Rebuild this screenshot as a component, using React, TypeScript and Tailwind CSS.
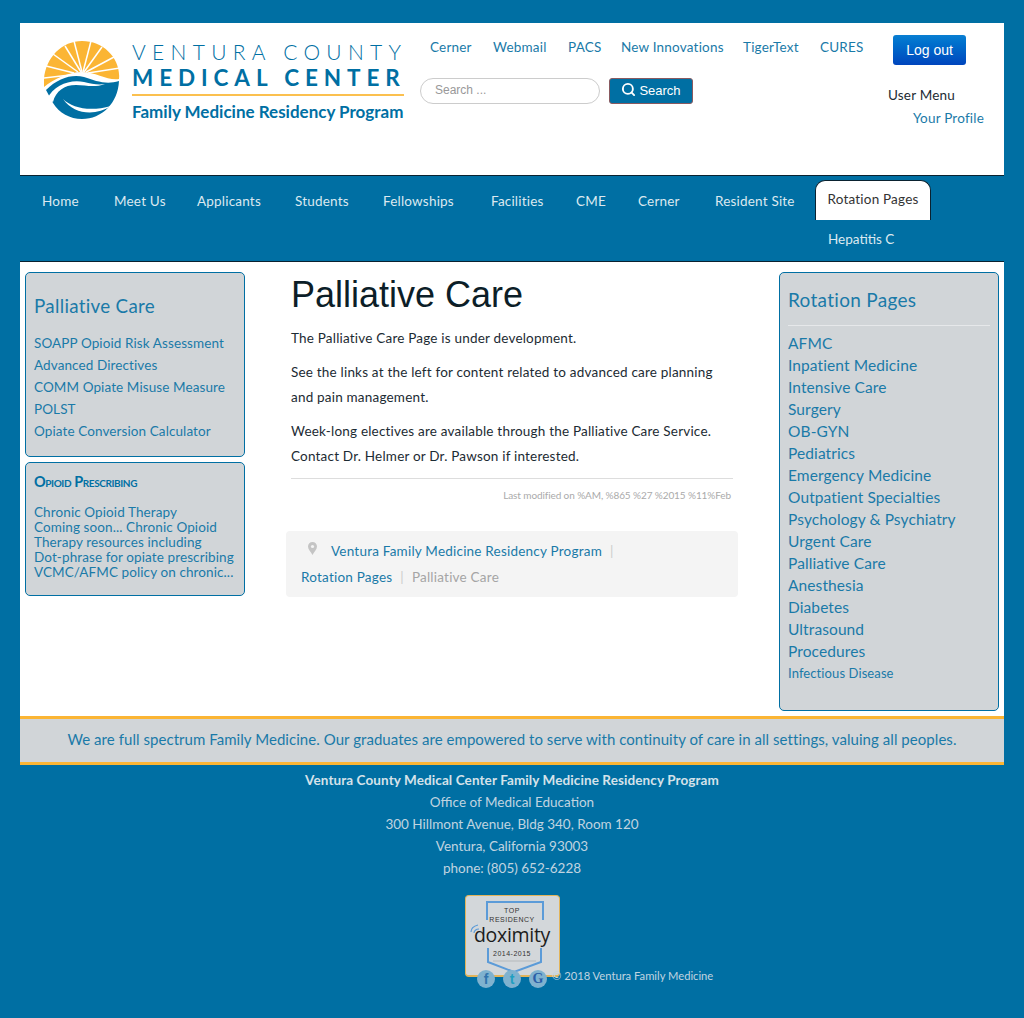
import React from 'react';
import { Search } from 'lucide-react';

const topLinks = [
  { label: 'Cerner', w: 'w-[63px]' },
  { label: 'Webmail', w: 'w-[75px]' },
  { label: 'PACS', w: 'w-[53px]' },
  { label: 'New Innovations', w: 'w-[122px]' },
  { label: 'TigerText', w: 'w-[77px]' },
  { label: 'CURES', w: 'w-[60px]' },
];

const navItems = [
  { label: 'Home', w: 'w-[72px]' },
  { label: 'Meet Us', w: 'w-[83px]' },
  { label: 'Applicants', w: 'w-[98px]' },
  { label: 'Students', w: 'w-[88px]' },
  { label: 'Fellowships', w: 'w-[108px]' },
  { label: 'Facilities', w: 'w-[85px]' },
  { label: 'CME', w: 'w-[62px]' },
  { label: 'Cerner', w: 'w-[77px]' },
  { label: 'Resident Site', w: 'w-[100px]' },
];

const sideLinks = ['SOAPP Opioid Risk Assessment', 'Advanced Directives', 'COMM Opiate Misuse Measure', 'POLST', 'Opiate Conversion Calculator'];

const rotationLinks = [
  'AFMC', 'Inpatient Medicine', 'Intensive Care', 'Surgery', 'OB-GYN', 'Pediatrics', 'Emergency Medicine',
  'Outpatient Specialties', 'Psychology & Psychiatry', 'Urgent Care', 'Palliative Care', 'Anesthesia', 'Diabetes',
  'Ultrasound', 'Procedures',
];

const footerLines = ['Office of Medical Education', '300 Hillmont Avenue, Bldg 340, Room 120', 'Ventura, California 93003', 'phone: (805) 652-6228'];

function LogoMark() {
  return (
    <svg width="76" height="78" viewBox="0 0 76 78" className="shrink-0">
      {/* sun */}
      <path d="M0 46 C-2 20 16 0 38 0 C60 0 77 18 75 38 C64 40 52 31 38 31 C24 31 10 38 0 46 Z" fill="#fbb534" />
      <g stroke="#ffffff" strokeWidth="1.5" fill="none">
        <path d="M37 31 L21 5" />
        <path d="M38 31 L30 0" />
        <path d="M39 31 L47 0" />
        <path d="M40 31 L58 6" />
        <path d="M42 31 L70 16" />
        <path d="M44 32 L76 27" />
        <path d="M34 31 L9 13" />
        <path d="M30 32 L2 25" />
        <path d="M26 34 L0 37" />
      </g>
      {/* water */}
      <path d="M2 49 C14 37 28 33 40 36 C52 40 62 44 75 40 C74 62 58 78 38 78 C26 78 15 72 9 62 Z" fill="#006fa3" />
      <path d="M3 58 C10 44 26 38 40 41 C48 43 54 44 61 43 C50 47 42 44 32 44 C20 44 12 50 9 61 Z" fill="#ffffff" />
      <path d="M19 58 C28 67 46 71 67 65 C52 75 30 74 19 58 Z" fill="#ffffff" />
    </svg>
  );
}

function DoximityBadge() {
  return (
    <div className="relative w-[95px] h-[82px] bg-[#d3d7da] rounded-[4px] border border-b-2 border-[#e2b45a] overflow-hidden">
      <svg width="95" height="82" viewBox="0 0 95 82" className="absolute left-[-1px] top-[-1px]">
        <path d="M22 25 V7 H78 V25" fill="none" stroke="#5b9bd8" strokeWidth="2" />
        <path d="M23 53 V67 L49 77 L76 67 V53" fill="none" stroke="#5b9bd8" strokeWidth="2" />
        <path d="M28 66 H71" stroke="#b5b9bc" strokeWidth="1" />
        <path d="M6 37 C6 33 9 31 13 30" fill="none" stroke="#5b9bd8" strokeWidth="1.2" />
        <path d="M9 38 C9 36 11 34 14 34" fill="none" stroke="#5b9bd8" strokeWidth="1.2" />
      </svg>
      <div className="relative flex flex-col items-center">
        <div className="mt-[10px] text-[7px] leading-[9px] tracking-[0.5px] text-[#333] text-center font-['Liberation_Sans',sans-serif]">TOP<br />RESIDENCY</div>
        <div className="text-[19.5px] leading-[22px] text-[#1c1c1c] tracking-[-0.3px] font-medium font-['Open_Sans',sans-serif]">doximity</div>
        <div className="mt-[4px] text-[7px] leading-[8px] tracking-[0.5px] text-[#333] font-['Liberation_Sans',sans-serif]">2014-2015</div>
      </div>
    </div>
  );
}

export default function App() {
  return (
    <div className="min-h-[1018px] bg-[#006fa3] pt-[23px] px-[20px] font-['Lato',sans-serif] text-[13.5px] text-[#1c2b33]">
      {/* header */}
      <header className="h-[152px] bg-white flex">
        <div className="w-[400px] pl-[24px] pt-[18px] flex gap-[12px] shrink-0">
          <LogoMark />
          <div className="text-[#006fa3] w-[272px]">
            <div className="text-[21px] leading-[25px] tracking-[6.3px] font-light whitespace-nowrap mt-[-2px]">VENTURA COUNTY</div>
            <div className="text-[22.5px] leading-[25px] tracking-[5.9px] font-bold whitespace-nowrap mt-[1px]">MEDICAL CENTER</div>
            <div className="h-[2px] bg-[#fbc04f] mt-[4px]" />
            <div className="text-[17px] leading-[22px] font-bold whitespace-nowrap mt-[5px]">Family Medicine Residency Program</div>
          </div>
        </div>
        <div className="w-[468px] shrink-0">
          <nav className="flex pl-[10px] pt-[15px] h-[55px] text-[#1a7aa8]">
            {topLinks.map((l) => (
              <a key={l.label} className={`${l.w} whitespace-nowrap leading-[18px] tracking-[0.2px]`}>{l.label}</a>
            ))}
          </nav>
          <div className="flex items-start gap-[9px]">
            <div className="w-[180px] h-[26px] rounded-full border border-[#ccc] pl-[14px] text-[12px] leading-[23px] text-[#999] font-['Liberation_Sans',sans-serif]">Search ...</div>
            <button className="w-[84px] h-[26px] flex items-center justify-center gap-[3px] bg-[#006fa3] border border-[#8a5a60] rounded-[3px] text-white text-[13px] font-['Liberation_Sans',sans-serif]">
              <Search size={15} strokeWidth={3} className="mt-[-3px]" />
              Search
            </button>
          </div>
        </div>
        <div className="flex-1 flex flex-col pt-[12px]">
          <button className="ml-[5px] w-[73px] h-[30px] rounded-[3px] bg-gradient-to-b from-[#0a7fd2] to-[#0045bd] text-white text-[14px] font-['Liberation_Sans',sans-serif]">Log out</button>
          <div className="mt-[21px] leading-[18px] tracking-[0.2px] text-[#1c2b33]">User Menu</div>
          <a className="mt-[5px] leading-[18px] tracking-[0.2px] text-[#1a7aa8] text-right pr-[20px]">Your Profile</a>
        </div>
      </header>

      {/* main nav */}
      <div className="h-[87px] bg-[#006fa3] border-y border-[#0a2230]">
        <div className="flex pl-[22px] h-[44px]">
          {navItems.map((n) => (
            <a key={n.label} className={`${n.w} pt-[16px] leading-[18px] whitespace-nowrap tracking-[0.2px] text-[#dce9f0]`}>{n.label}</a>
          ))}
          <a className="mt-[4px] w-[116px] h-[40px] bg-white rounded-t-[10px] border-x border-t border-[#0a2230] text-center leading-[37px] text-[#333] whitespace-nowrap tracking-[0.2px]">Rotation Pages</a>
        </div>
        <a className="block pl-[808px] pt-[10px] leading-[18px] text-[#dce9f0]">Hepatitis C</a>
      </div>

      {/* three columns */}
      <main className="h-[454px] bg-white flex pt-[10px] pl-[5px]">
        <aside className="w-[220px] shrink-0 flex flex-col gap-[5px]">
          <div className="h-[185px] bg-[#d1d5d8] border border-[#006fa3] rounded-[5px] px-[8px] pt-[21px]">
            <h3 className="text-[18.8px] leading-[24px] text-[#1a7aa8] tracking-[0.3px]">Palliative Care</h3>
            <ul className="mt-[14px] text-[#1a7aa8]">
              {sideLinks.map((s) => (
                <li key={s} className="leading-[22px] whitespace-nowrap tracking-[0.1px]">{s}</li>
              ))}
            </ul>
          </div>
          <div className="h-[134px] bg-[#d1d5d8] border border-[#006fa3] rounded-[5px] px-[8px] pt-[9px]">
            <h3 className="text-[14.5px] leading-[20px] tracking-[-0.4px] text-[#006fa3] font-bold [font-variant:small-caps]">Opioid Prescribing</h3>
            <p className="mt-[13px] leading-[15px] text-[#1a7aa8] whitespace-nowrap tracking-[0.1px]">
              Chronic Opioid Therapy<br />Coming soon... Chronic Opioid<br />Therapy resources including<br />Dot-phrase for opiate prescribing<br />VCMC/AFMC policy on chronic...
            </p>
          </div>
        </aside>

        <section className="w-[534px] shrink-0 pl-[41px]">
          <div className="w-[442px] ml-[5px]">
            <h1 className="text-[36px] leading-[44px] text-[#0c1e28] font-['Liberation_Sans',sans-serif] mt-[1px]">Palliative Care</h1>
            <div className="mt-[9px] leading-[25px] tracking-[0.2px]">
              <p>The Palliative Care Page is under development.</p>
              <p className="mt-[9px] max-w-[430px]">See the links at the left for content related to advanced care planning and pain management.</p>
              <p className="mt-[9px]">Week-long electives are available through the Palliative Care Service. Contact Dr. Helmer or Dr. Pawson if interested.</p>
            </div>
            <div className="mt-[9px] border-t border-[#ddd] pt-[8px] pr-[2px] text-right text-[10px] leading-[16px] tracking-[-0.1px] text-[#aaa]">Last modified on %AM, %865 %27 %2015 %11%Feb</div>
          </div>
          <div className="mt-[28px] w-[452px] h-[66px] bg-[#f4f4f4] rounded-[4px] pl-[15px] pt-[7px] leading-[26px] tracking-[0.22px]">
            <div className="flex items-center">
              <svg width="9" height="13" viewBox="0 0 9 13" className="ml-[7px] mt-[-5px] shrink-0">
                <path d="M4.5 0 C7 0 9 2 9 4.5 C9 7.5 6 10 4.5 13 C3 10 0 7.5 0 4.5 C0 2 2 0 4.5 0 Z" fill="#c4c4c4" />
                <circle cx="4.5" cy="4.5" r="1.6" fill="#f4f4f4" />
              </svg>
              <a className="ml-[14px] text-[#1a7aa8]">Ventura Family Medicine Residency Program</a>
              <span className="ml-[8px] text-[#ccc]">|</span>
            </div>
            <div>
              <a className="text-[#1a7aa8]">Rotation Pages</a>
              <span className="mx-[8px] text-[#ccc]">|</span>
              <span className="text-[#a5a5a5]">Palliative Care</span>
            </div>
          </div>
        </section>

        <aside className="w-[220px] h-[439px] shrink-0 bg-[#d1d5d8] border border-[#006fa3] rounded-[5px] px-[8px] pt-[15px]">
          <h3 className="text-[19px] leading-[24px] text-[#1a7aa8] tracking-[0.3px] pb-[13px] border-b border-[#e6e8ea]">Rotation Pages</h3>
          <ul className="mt-[6px] text-[15.5px] leading-[22px] text-[#1a7aa8] tracking-[0.1px]">
            {rotationLinks.map((r) => (
              <li key={r} className="whitespace-nowrap">{r}</li>
            ))}
            <li className="text-[13px]">Infectious Disease</li>
          </ul>
        </aside>
      </main>

      {/* tagline */}
      <div className="h-[49px] bg-[#d1d5d8] border-y-[3px] border-[#fbb534] text-center text-[15px] leading-[41px] tracking-[0.05px] text-[#1a7aa8] whitespace-nowrap">
        We are full spectrum Family Medicine. Our graduates are empowered to serve with continuity of care in all settings, valuing all peoples.
      </div>

      {/* footer */}
      <footer className="pt-[4px] text-center leading-[22px] text-[#c0d4e0]">
        <div className="font-bold text-[#d5e2ea] tracking-[0.1px]">Ventura County Medical Center Family Medicine Residency Program</div>
        {footerLines.map((f) => (
          <div key={f}>{f}</div>
        ))}
        <div className="relative mt-[16px] flex justify-center">
          <DoximityBadge />
          <div className="absolute left-[457px] top-[75px] flex gap-[8px]">
            <span className="w-[18px] h-[18px] rounded-full bg-[#7fb2cf] text-[#2f74ad] font-bold text-[14px] leading-[18px] font-['Liberation_Sans',sans-serif]">f</span>
            <span className="w-[18px] h-[18px] rounded-full bg-[#7fb2cf] text-[#1f9fc0] font-bold text-[14px] leading-[18px] font-['Liberation_Sans',sans-serif]">t</span>
            <span className="w-[18px] h-[18px] rounded-full bg-[#7fb2cf] text-[#2a5ea8] font-bold text-[14px] leading-[18px] font-['Liberation_Serif',serif]">G</span>
          </div>
          <div className="absolute left-[532px] top-[72px] text-[11.2px] leading-[18px] whitespace-nowrap">© 2018 Ventura Family Medicine</div>
        </div>
      </footer>
    </div>
  );
}
